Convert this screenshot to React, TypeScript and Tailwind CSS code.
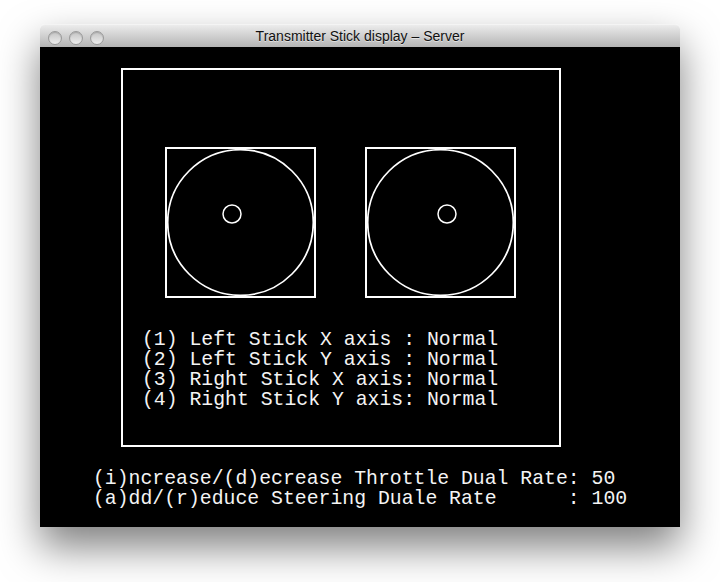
import React from "react";

function Stick({ dx, dy }: { dx: number; dy: number }) {
  return (
    <div className="w-[151px] h-[151px] border-2 border-white box-border">
      <svg width="147" height="147" viewBox="0 0 147 147" className="block">
        <circle cx="73.5" cy="73.5" r="72.8" fill="none" stroke="white" strokeWidth="1.7" />
        <circle cx={dx} cy={dy} r="9" fill="none" stroke="white" strokeWidth="1.5" />
      </svg>
    </div>
  );
}

function Light() {
  return (
    <div className="w-[14px] h-[14px] rounded-full border border-[#9a9a9a] bg-gradient-to-b from-[#c4c4c4] to-[#eeeeee] shadow-[inset_0_1px_1px_rgba(0,0,0,0.15)]" />
  );
}

export default function App() {
  const mono = { fontFamily: '"Liberation Mono", "Courier New", monospace' };
  return (
    <div className="w-[720px] h-[582px] bg-white overflow-hidden pt-[24px] pl-[40px]">
      <div className="w-[640px] shadow-[0_20px_40px_rgba(0,0,0,0.5)] rounded-t-[5px]">
        <div className="relative h-[23px] rounded-t-[5px] bg-gradient-to-b from-[#ececec] to-[#b4b4b4] border-t border-[#f4f4f4] flex items-center justify-center">
          <div className="absolute left-[8px] top-[6px] flex gap-[7px]">
            <Light />
            <Light />
            <Light />
          </div>
          <span
            className="text-[14px] text-[#111111] mt-[1px] [text-shadow:0_1px_0_rgba(255,255,255,0.5)]"
            style={{ fontFamily: '"Liberation Sans", Arial, sans-serif' }}
          >
            Transmitter Stick display – Server
          </span>
        </div>
        <div className="w-[640px] h-[480px] bg-black pt-[21px] text-[#f4f4f4] text-[19.8px] leading-[20px]" style={mono}>
          <div className="ml-[81px] w-[440px] h-[379px] border-2 border-white box-border pt-[77px] pl-[19px]">
            <div className="flex gap-[49px] ml-[23px]">
              <Stick dx={65} dy={65} />
              <Stick dx={80} dy={65} />
            </div>
            <div className="mt-[32px] whitespace-pre">
              <div>(1) Left Stick X axis : Normal</div>
              <div>(2) Left Stick Y axis : Normal</div>
              <div>(3) Right Stick X axis: Normal</div>
              <div>(4) Right Stick Y axis: Normal</div>
            </div>
          </div>
          <div className="ml-[53px] mt-[22px] whitespace-pre">
            <div>(i)ncrease/(d)ecrease Throttle Dual Rate: 50</div>
            <div>(a)dd/(r)educe Steering Duale Rate      : 100</div>
          </div>
        </div>
      </div>
    </div>
  );
}
